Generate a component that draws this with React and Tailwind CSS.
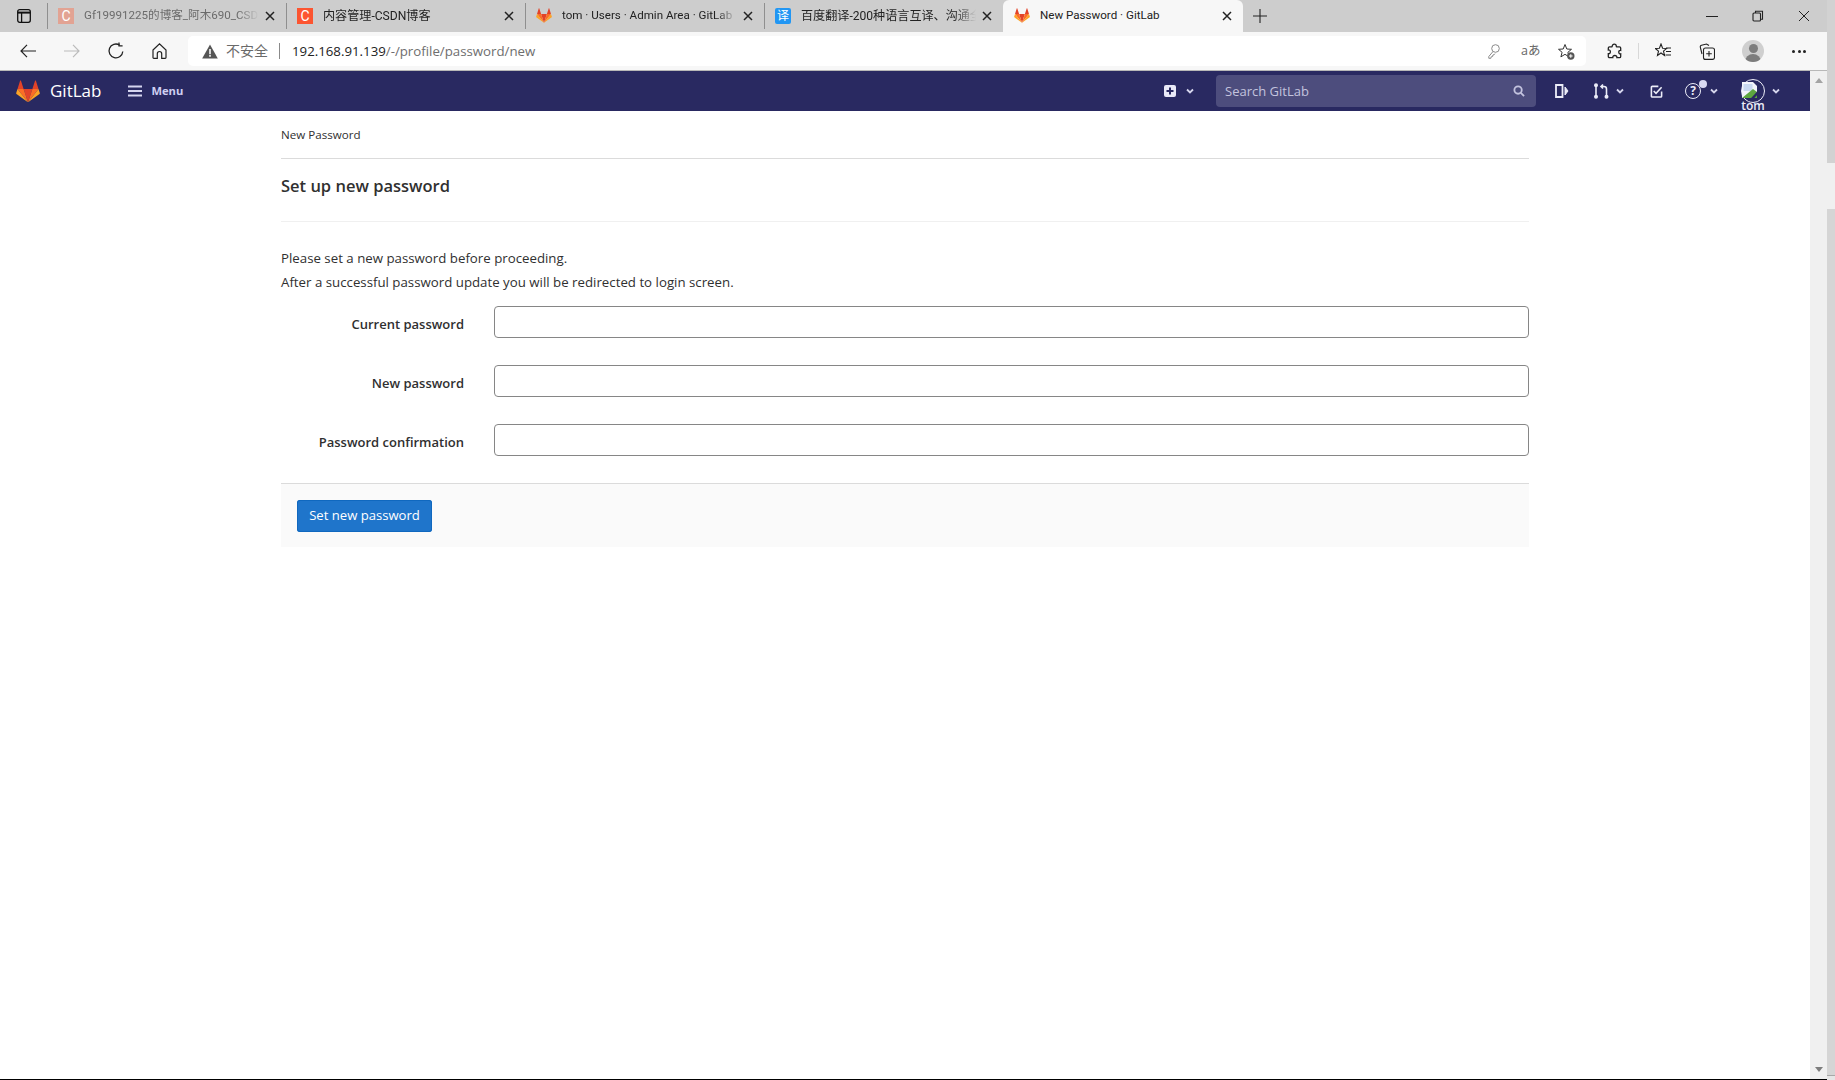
const FONT = "font-['Open_Sans','Noto_Sans_CJK_SC',sans-serif]";
const TABFONT = "font-['Roboto','Noto_Sans_CJK_SC',sans-serif]";

function Fox({ size = 20 }) {
  return (
    <svg width={size} height={size * 0.95} viewBox="0 0 24 23" className="shrink-0">
      <path d="M12 22.5 16.4 9H7.6z" fill="#e24329" />
      <path d="M12 22.5 7.6 9H1.4z" fill="#fc6d26" />
      <path d="M1.4 9 .1 13.1c-.1.4 0 .8.3 1L12 22.5z" fill="#fca326" />
      <path d="M1.4 9h6.2L4.9.8c-.1-.4-.7-.4-.9 0z" fill="#e24329" />
      <path d="M12 22.5 16.4 9h6.2z" fill="#fc6d26" />
      <path d="M22.6 9l1.3 4.1c.1.4 0 .8-.3 1L12 22.5z" fill="#fca326" />
      <path d="M22.6 9h-6.2L19.1.8c.1-.4.7-.4.9 0z" fill="#e24329" />
    </svg>
  );
}

function CloseX() {
  return (
    <svg width="10" height="10" viewBox="0 0 10 10" className="shrink-0" stroke="#222" strokeWidth="1.5">
      <path d="M1 1l8 8M9 1l-8 8" />
    </svg>
  );
}

function Tab({ icon, title, active, dim, small }) {
  return (
    <div className={`flex h-[32px] shrink-0 items-center pr-[11px] ${active ? 'w-[240px] rounded-t-[6px] bg-[#f7f7f7] pl-[11px]' : 'w-[238px] pl-[10px]'}`}>
      <span className="mr-[10px] flex w-[16px] justify-center">{icon}</span>
      <span className={`flex-1 overflow-hidden whitespace-nowrap ${small ? 'text-[11.6px]' : 'text-[12.1px]'} ${active ? '' : '[mask-image:linear-gradient(to_right,black_88%,transparent)]'} ${dim ? 'text-[#6b6b6b]' : 'text-[#222]'}`}>{title}</span>
      <span className="ml-[6px]"><CloseX /></span>
    </div>
  );
}

function Sep() {
  return (
    <div className="flex h-[32px] w-px shrink-0 items-center">
      <div className="h-[26px] w-px bg-[#8f8f8f]" />
    </div>
  );
}

function CIcon({ dim }) {
  return (
    <span className={`flex h-[16px] w-[16px] items-center justify-center text-[14px] leading-none text-white ${dim ? 'bg-[#e2a393]' : 'bg-[#fc5531]'}`}>C</span>
  );
}

function NavChevron() {
  return (
    <svg width="10" height="10" viewBox="0 0 10 10" fill="none" stroke="#d5d5ec" strokeWidth="1.8" className="shrink-0">
      <path d="M2 3.5 5 6.5 8 3.5" />
    </svg>
  );
}

export default function App() {
  return (
    <div className={`flex h-[1080px] w-[1835px] overflow-hidden bg-white ${FONT}`}>
      <div className="flex w-[1827px] shrink-0 flex-col">
        {/* tab strip */}
        <div className={`flex h-[32px] shrink-0 items-center bg-[#cdcdcd] pr-[17px] ${TABFONT}`}>
          <div className="flex h-[32px] w-[47px] shrink-0 items-center pl-[17px]">
            <svg width="14" height="14" viewBox="0 0 14 14" fill="none" stroke="#111" strokeWidth="1.3">
              <rect x=".7" y=".7" width="12.6" height="12.6" rx="2" />
              <path d="M.7 3.6h12.6" strokeWidth="2" />
              <path d="M4.6 3.6v9.7" />
            </svg>
          </div>
          <Sep />
          <Tab dim small icon={<CIcon dim />} title="Gf19991225的博客_阿木690_CSD" />
          <Sep />
          <Tab icon={<CIcon />} title="内容管理-CSDN博客" />
          <Sep />
          <Tab small icon={<Fox size={16} />} title="tom · Users · Admin Area · GitLab" />
          <Sep />
          <Tab
            icon={<span className="flex h-[16px] w-[16px] items-center justify-center rounded-[2px] bg-[#2196f3] text-[12px] leading-none text-white">译</span>}
            title="百度翻译-200种语言互译、沟通全"
          />
          <Tab active small icon={<Fox size={16} />} title="New Password · GitLab" />
          <div className="flex h-[32px] w-[34px] shrink-0 items-center justify-center">
            <svg width="14" height="14" viewBox="0 0 14 14" stroke="#222" strokeWidth="1.1">
              <path d="M7 0v14M0 7h14" />
            </svg>
          </div>
          <div className="flex-1" />
          <div className="flex shrink-0 items-center gap-[34px]">
            <div className="h-px w-[12px] bg-[#222]" />
            <svg width="12" height="12" viewBox="0 0 12 12" fill="none" stroke="#222" strokeWidth="1.1">
              <rect x="1" y="3" width="7.5" height="8" rx="1" />
              <path d="M3.5 3V1.2h7v8H8.5" />
            </svg>
            <svg width="12" height="12" viewBox="0 0 12 12" stroke="#222" strokeWidth="1">
              <path d="M1 1l10 10M11 1 1 11" />
            </svg>
          </div>
        </div>

        {/* address bar */}
        <div className="flex h-[38px] shrink-0 items-center bg-[#f7f7f7]">
          <div className="flex w-[188px] shrink-0 items-center pl-[20px]">
            <svg width="16" height="14" viewBox="0 0 16 14" fill="none" stroke="#222" strokeWidth="1.2" className="mr-[28px]">
              <path d="M16 7H1M7 .8 1 7l6 6.2" />
            </svg>
            <svg width="16" height="14" viewBox="0 0 16 14" fill="none" stroke="#bbb" strokeWidth="1.2" className="mr-[27px]">
              <path d="M0 7h15M9 .8 15 7l-6 6.2" />
            </svg>
            <svg width="18" height="18" viewBox="0 0 18 18" fill="none" stroke="#222" strokeWidth="1.3" className="mr-[27px]">
              <path d="M15.8 9.5A6.9 6.9 0 1 1 12.5 3" />
              <path d="M12 .4v3.4h3.6" />
            </svg>
            <svg width="15" height="16" viewBox="0 0 15 16" fill="none" stroke="#222" strokeWidth="1.2">
              <path d="M1 7 7.5.9 14 7v7.5a.8.8 0 0 1-.8.8H9.7v-4.6a2.2 2.2 0 0 0-4.4 0v4.6H1.8a.8.8 0 0 1-.8-.8z" />
            </svg>
          </div>
          <div className="flex h-[30px] w-[1398px] shrink-0 items-center rounded-[5px] bg-white pl-[14px] pr-[11px]">
            <svg width="16" height="15" viewBox="0 0 16 15" className="mr-[8px] shrink-0">
              <path d="M8 .5 15.8 14.5H.2z" fill="#555" />
              <path d="M7.2 5h1.6v5.2H7.2zM7.2 11h1.6v1.7H7.2z" fill="#f7f7f7" />
            </svg>
            <span className="text-[14px] leading-none text-[#6a6a6a]">不安全</span>
            <div className="ml-[11px] mr-[12px] h-[16px] w-px bg-[#8a8a8a]" />
            <span className="whitespace-nowrap pt-[1px] text-[13.25px] text-[#222]">
              192.168.91.139<span className="text-[#6e6e6e]">/-/profile/password/new</span>
            </span>
            <div className="flex-1" />
            <svg width="12" height="15" viewBox="0 0 12 15" fill="none" stroke="#8a8a8a" strokeWidth="1" className="mr-[21px] shrink-0">
              <circle cx="7.5" cy="4.5" r="3.8" />
              <path d="M5 7.5.8 12.5V14.3h2l.4-1.5 1.4-.3.3-1.5 1.4-.4.7-1" />
            </svg>
            <span className="mr-[19px] w-[18px] whitespace-nowrap text-[12.5px] leading-none text-[#666]">aあ</span>
            <svg width="17" height="17" viewBox="0 0 17 17" fill="none" stroke="#333" strokeWidth="1" className="shrink-0">
              <path d="M7 1.5 8.8 6l4.7.3-3.6 3 1.2 4.6L7 11.3l-4.1 2.6 1.2-4.6-3.6-3L5.2 6z" />
              <circle cx="12.8" cy="13" r="3.7" fill="#555" stroke="none" />
              <path d="M12.8 11.2v3.6M11 13h3.6" stroke="#fff" />
            </svg>
          </div>
          <div className="flex flex-1 items-center pl-[21px]">
            <svg width="15" height="17" viewBox="0 0 15 17" fill="none" stroke="#222" strokeWidth="1.3" className="mr-[16px] shrink-0">
              <path d="M5.2 3.2C5.2.5 9.3.5 9.3 3.2c0 .5 0 .7.5.7h2.7c.7 0 1.2.5 1.2 1.2v2.3c-2.6-.6-2.6 4 0 3.4v2.6c0 .7-.5 1.2-1.2 1.2H9.9c.5-2.8-4.6-2.8-4.1 0H2.5c-.7 0-1.2-.5-1.2-1.2v-2.7c2.8.5 2.8-4.3 0-3.7V5.1c0-.7.5-1.2 1.2-1.2h2.2c.4 0 .5-.2.5-.7z" />
            </svg>
            <div className="mr-[16px] h-[16px] w-px shrink-0 bg-[#d8d8d8]" />
            <svg width="16" height="16" viewBox="0 0 16 16" fill="none" stroke="#222" strokeWidth="1.1" className="mr-[28px] shrink-0">
              <path d="M6 1 7.6 5.2l4 .3-3.1 2.7 1 4.2L6 10l-3.5 2.4 1-4.2L.4 5.5l4-.3z" />
              <path d="M11 5h5M11 8.5h5M10.5 12H16" />
            </svg>
            <svg width="16" height="17" viewBox="0 0 16 17" fill="none" stroke="#222" strokeWidth="1.1" className="mr-[27px] shrink-0">
              <rect x="4.5" y="5" width="11" height="11.4" rx="2" />
              <path d="M10 2.5 7.5 1 2.5 2.2a1.6 1.6 0 0 0-1.2 2L3 11M10 8v5.5M7.2 10.8h5.6" />
            </svg>
            <span className="relative mr-[28px] block h-[22px] w-[22px] shrink-0 overflow-hidden rounded-full bg-[#cfcfcf]">
              <span className="absolute left-[6.5px] top-[4px] block h-[9px] w-[9px] rounded-full bg-[#7d7d7d]" />
              <span className="absolute left-[3px] top-[14px] block h-[10px] w-[16px] rounded-t-full bg-[#7d7d7d]" />
            </span>
            <span className="flex gap-[2.5px]">
              <span className="h-[3px] w-[3px] rounded-full bg-[#222]" />
              <span className="h-[3px] w-[3px] rounded-full bg-[#222]" />
              <span className="h-[3px] w-[3px] rounded-full bg-[#222]" />
            </span>
          </div>
        </div>
        <div className="h-px shrink-0 bg-[#b8b8b8]" />

        {/* viewport */}
        <div className="flex min-h-0 flex-1">
          <div className="flex min-w-0 flex-1 flex-col">
            {/* GitLab navbar */}
            <div className="flex h-[40px] shrink-0 items-center bg-[#292961]">
              <div className="flex items-center pl-[16px]">
                <Fox size={24} />
                <span className="ml-[10px] text-[17px] text-white">GitLab</span>
              </div>
              <svg width="14" height="12" viewBox="0 0 14 12" stroke="#d5d5ef" strokeWidth="1.8" className="ml-[27px]">
                <path d="M0 1.5h14M0 6h14M0 10.5h14" />
              </svg>
              <span className="ml-[9px] pt-[1px] text-[11.2px] font-bold text-[#cfcff2]">Menu</span>
              <div className="flex-1" />
              <svg width="12" height="12" viewBox="0 0 12 12" className="shrink-0">
                <rect width="12" height="12" rx="2" fill="#e9e9f7" />
                <path d="M6 2.5v7M2.5 6h7" stroke="#292961" strokeWidth="2" />
              </svg>
              <span className="ml-[9px] mr-[21px]"><NavChevron /></span>
              <div className="flex h-[32px] w-[320px] shrink-0 items-center justify-between rounded-[4px] bg-[#4d4d7d] pl-[9px] pr-[11px]">
                <span className="pt-[1px] text-[13px] text-[#c3c3de]">Search GitLab</span>
                <svg width="12" height="12" viewBox="0 0 13 13" fill="none" stroke="#c3c3de" strokeWidth="2">
                  <circle cx="5.5" cy="5.5" r="4" />
                  <path d="M8.5 8.5 12 12" />
                </svg>
              </div>
              <svg width="14" height="14" viewBox="0 0 14 14" fill="none" stroke="#ecedf8" strokeWidth="1.8" className="ml-[19px] shrink-0">
                <path d="M1 1h6.5v12H1z" />
                <path d="M10 3l3 4-3 4z" fill="#ecedf8" strokeWidth="1" />
              </svg>
              <svg width="15" height="16" viewBox="0 0 15 16" fill="none" stroke="#ecedf8" strokeWidth="1.6" className="ml-[25px] shrink-0">
                <path d="M2 3v10M9 1.5 7 3.5l2 2M7.5 3.5H10a2.5 2.5 0 0 1 2.5 2.5v7" />
                <circle cx="2" cy="2.2" r="1.2" fill="#ecedf8" />
                <circle cx="2" cy="13.8" r="1.2" fill="#ecedf8" />
                <circle cx="12.5" cy="13.8" r="1.2" fill="#ecedf8" />
              </svg>
              <span className="ml-[6px]"><NavChevron /></span>
              <svg width="13" height="13" viewBox="0 0 14 14" fill="none" stroke="#ecedf8" strokeWidth="1.7" className="ml-[25px] shrink-0">
                <path d="M12.5 7v5a1 1 0 0 1-1 1h-9a1 1 0 0 1-1-1V2.5a1 1 0 0 1 1-1H9" />
                <path d="M4 6.5 6.5 9l6-6.5" />
              </svg>
              <span className="relative ml-[22px] mr-[8px] flex h-[16px] w-[16px] shrink-0 items-center justify-center rounded-full border-[1.5px] border-[#ecedf8] text-[12px] font-bold leading-none text-[#ecedf8]">
                ?
                <span className="absolute -right-[7px] -top-[4px] h-[8px] w-[8px] rounded-full bg-[#d8d9f2]" />
              </span>
              <NavChevron />
              <div className="relative ml-[22px] h-[24px] w-[24px] shrink-0">
                <svg width="24" height="24" viewBox="0 0 24 24">
                  <circle cx="12" cy="12" r="11.5" fill="none" stroke="#ecedf8" strokeWidth="1" />
                  <path d="M1 3h11l4 4v12H1z" fill="#f2f4fa" />
                  <path d="M2.5 5h9v7h-9z" fill="#c9d8f0" />
                  <path d="M1 19 12 10l4 3v6z" fill="#5da63f" />
                  <path d="M9 22 21 9" stroke="#292961" strokeWidth="2.5" />
                </svg>
                <span className="absolute -bottom-[9px] left-0 right-0 text-center text-[12px] font-semibold leading-[12px] text-[#ecedf8]">tom</span>
              </div>
              <span className="ml-[6px] mr-[29px]"><NavChevron /></span>
            </div>

            {/* page */}
            <div className="mx-auto w-[1248px] text-[#303030]">
              <div className="flex h-[48px] items-center border-b border-[#dbdbdb] pt-[1px] text-[11.6px]">New Password</div>
              <div className="flex h-[63px] items-center border-b border-[#f0f0f0] pb-[7px] text-[16.5px] font-semibold leading-none text-[#303030]">
                Set up new password
              </div>
              <p className="mt-[24px] text-[13.27px] leading-[24px]">Please set a new password before proceeding.</p>
              <p className="text-[13.27px] leading-[24px]">After a successful password update you will be redirected to login screen.</p>

              <div className="mt-[12px] flex flex-col gap-[27px]">
                {['Current password', 'New password', 'Password confirmation'].map((label) => (
                  <div key={label} className="flex h-[32px] items-center">
                    <label className="mt-[5px] w-[183px] shrink-0 text-right text-[13px] font-semibold text-[#303030]">{label}</label>
                    <input type="password" className="ml-[30px] h-[32px] flex-1 rounded-[4px] border border-[#868686] bg-white" />
                  </div>
                ))}
              </div>

              <div className="mt-[27px] flex h-[64px] items-center border-t border-[#dbdbdb] bg-[#fafafa] pl-[16px]">
                <button className="flex h-[32px] w-[135px] items-center justify-center rounded-[3px] bg-[#1f75cb] pt-[1px] text-[13.1px] text-white shadow-[inset_0_0_0_1px_#1068bf]">
                  Set new password
                </button>
              </div>
            </div>
          </div>

          {/* inner scrollbar */}
          <div className="flex w-[17px] shrink-0 flex-col items-center justify-between bg-[#f0f0f0] py-[7px]">
            <div className="h-0 w-0 border-x-[4px] border-b-[5px] border-x-transparent border-b-[#a3a3a3]" />
            <div className="h-0 w-0 border-x-[4px] border-t-[5px] border-x-transparent border-t-[#7d7d7d]" />
          </div>
        </div>
        <div className="h-px shrink-0 bg-black" />
      </div>

      {/* outer scrollbar */}
      <div className="flex w-[8px] shrink-0 flex-col">
        <div className="h-[163px] bg-[#d2d2d2]" />
        <div className="h-[46px] bg-[#f0f0f0]" />
        <div className="flex-1 bg-[#d5d5d5]" />
        <div className="h-px bg-[#a8a8a8]" />
        <div className="h-[4px] bg-[#e6e6e6]" />
      </div>
    </div>
  );
}
